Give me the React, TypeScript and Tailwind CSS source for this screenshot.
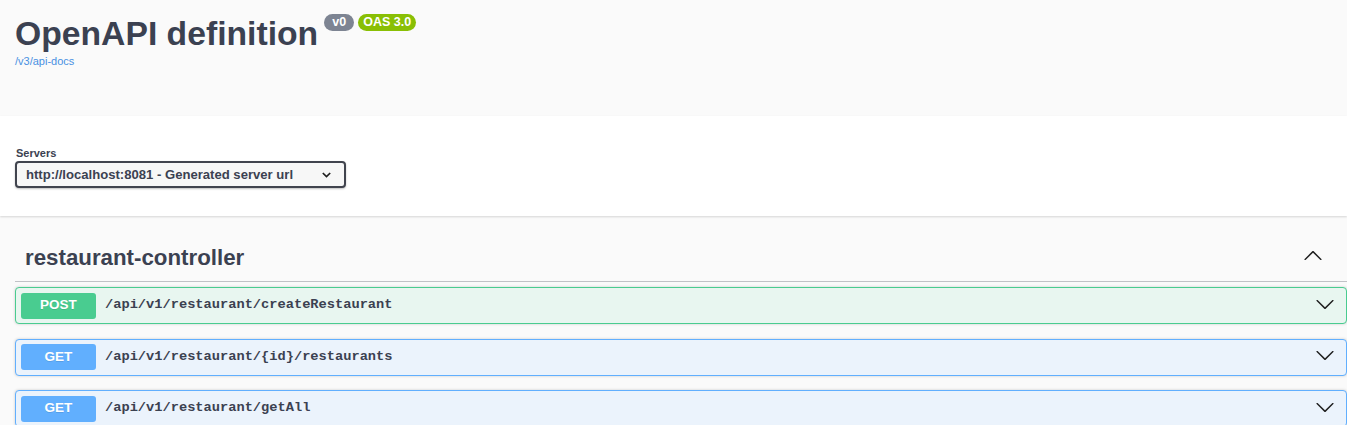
import { ReactNode } from "react";

// Swagger-style API docs page: info header, servers picker, one tag section.

const ARROW =
	"M17.418 6.109c.272-.268.709-.268.979 0s.271.701 0 .969l-7.908 7.83c-.27.268-.707.268-.979 0l-7.908-7.83c-.27-.268-.27-.701 0-.969.271-.268.709-.268.979 0L10 13.25l7.418-7.141z";

function Arrow({ up = false }: { up?: boolean }) {
	return (
		<svg
			width="20"
			height="20"
			viewBox="0 0 20 20"
			className={up ? "rotate-180" : ""}
			aria-hidden
		>
			<path d={ARROW} fill="#1f1f1f" />
		</svg>
	);
}

type Op = { method: "POST" | "GET"; path: string };

const OPS: Op[] = [
	{ method: "POST", path: "/api/v1/restaurant/createRestaurant" },
	{ method: "GET", path: "/api/v1/restaurant/{id}/restaurants" },
	{ method: "GET", path: "/api/v1/restaurant/getAll" },
];

function Badge({ className, children }: { className: string; children: ReactNode }) {
	return (
		<span
			className={`flex h-[17px] items-center justify-center rounded-full text-[12.5px] font-bold leading-none text-white ${className}`}
		>
			{children}
		</span>
	);
}

function OpBlock({ op }: { op: Op }) {
	const post = op.method === "POST";
	return (
		<div
			className={`mb-[14.5px] flex h-[37px] items-center rounded-[4px] border pl-[5px] shadow-[0_0_3px_rgba(0,0,0,0.19)] ${
				post ? "border-[#49cc90] bg-[#e8f6f0]" : "border-[#61affe] bg-[#ebf3fc]"
			}`}
		>
			<span
				className={`flex h-[26px] w-[75px] shrink-0 items-center justify-center rounded-[3px] text-[13.5px] font-bold text-white [text-shadow:0_1px_0_rgba(0,0,0,0.1)] ${
					post ? "bg-[#49cc90]" : "bg-[#61affe]"
				}`}
			>
				{op.method}
			</span>
			<span className="flex-1 pl-[9px] font-['Liberation_Mono',monospace] text-[13.7px] font-bold text-[#3b4151]">
				{op.path}
			</span>
			<span className="mb-[4px] mr-[11px] flex">
				<Arrow />
			</span>
		</div>
	);
}

export default function App() {
	return (
		<div className="min-h-screen overflow-hidden bg-[#fafafa] font-['Liberation_Sans',Arial,sans-serif] text-[#3b4151]">
			{/* Info */}
			<div className="h-[116px] px-[15px] pt-[14px]">
				<div className="flex items-start">
					<h2 className="mt-[2px] text-[33.7px] font-bold leading-[34px]">OpenAPI definition</h2>
					<div className="ml-[6px] flex gap-[4px]">
						<Badge className="w-[30px] bg-[#7d8492]">v0</Badge>
						<Badge className="w-[58px] bg-[#89bf04]">OAS 3.0</Badge>
					</div>
				</div>
				<a className="mt-[5px] block text-[11px] leading-[13px] text-[#4990e2]">/v3/api-docs</a>
			</div>

			{/* Servers */}
			<div className="h-[100px] bg-white px-[15px] pt-[30px] shadow-[0_1px_2px_0_rgba(0,0,0,0.15)]">
				<div className="pl-px text-[11px] font-bold leading-[15px]">Servers</div>
				<div className="flex h-[27px] w-[331px] items-center justify-between rounded-[4px] border-2 border-[#41444e] bg-[#f7f7f7] pl-[9px] pr-[13px] shadow-[0_1px_2px_0_rgba(0,0,0,0.25)]">
					<span className="text-[13.1px] font-bold">http://localhost:8081 - Generated server url</span>
					<svg width="9" height="6" viewBox="0 0 9 6" aria-hidden>
						<path d="M0.8 1l3.7 3.6L8.2 1" fill="none" stroke="#1f1f1f" strokeWidth="1.7" />
					</svg>
				</div>
			</div>

			{/* Tag section */}
			<div className="mt-[19px] pl-[15px]">
				<div className="flex items-center justify-between border-b border-[#3b4151]/30 py-[10px] pl-[10px] pr-[24px]">
					<h3 className="text-[22.3px] font-bold leading-[26px]">restaurant-controller</h3>
					<span className="mb-[4px] flex">
						<Arrow up />
					</span>
				</div>
				<div className="mt-[5px]">
					{OPS.map((op) => (
						<OpBlock key={op.path} op={op} />
					))}
				</div>
			</div>
		</div>
	);
}
